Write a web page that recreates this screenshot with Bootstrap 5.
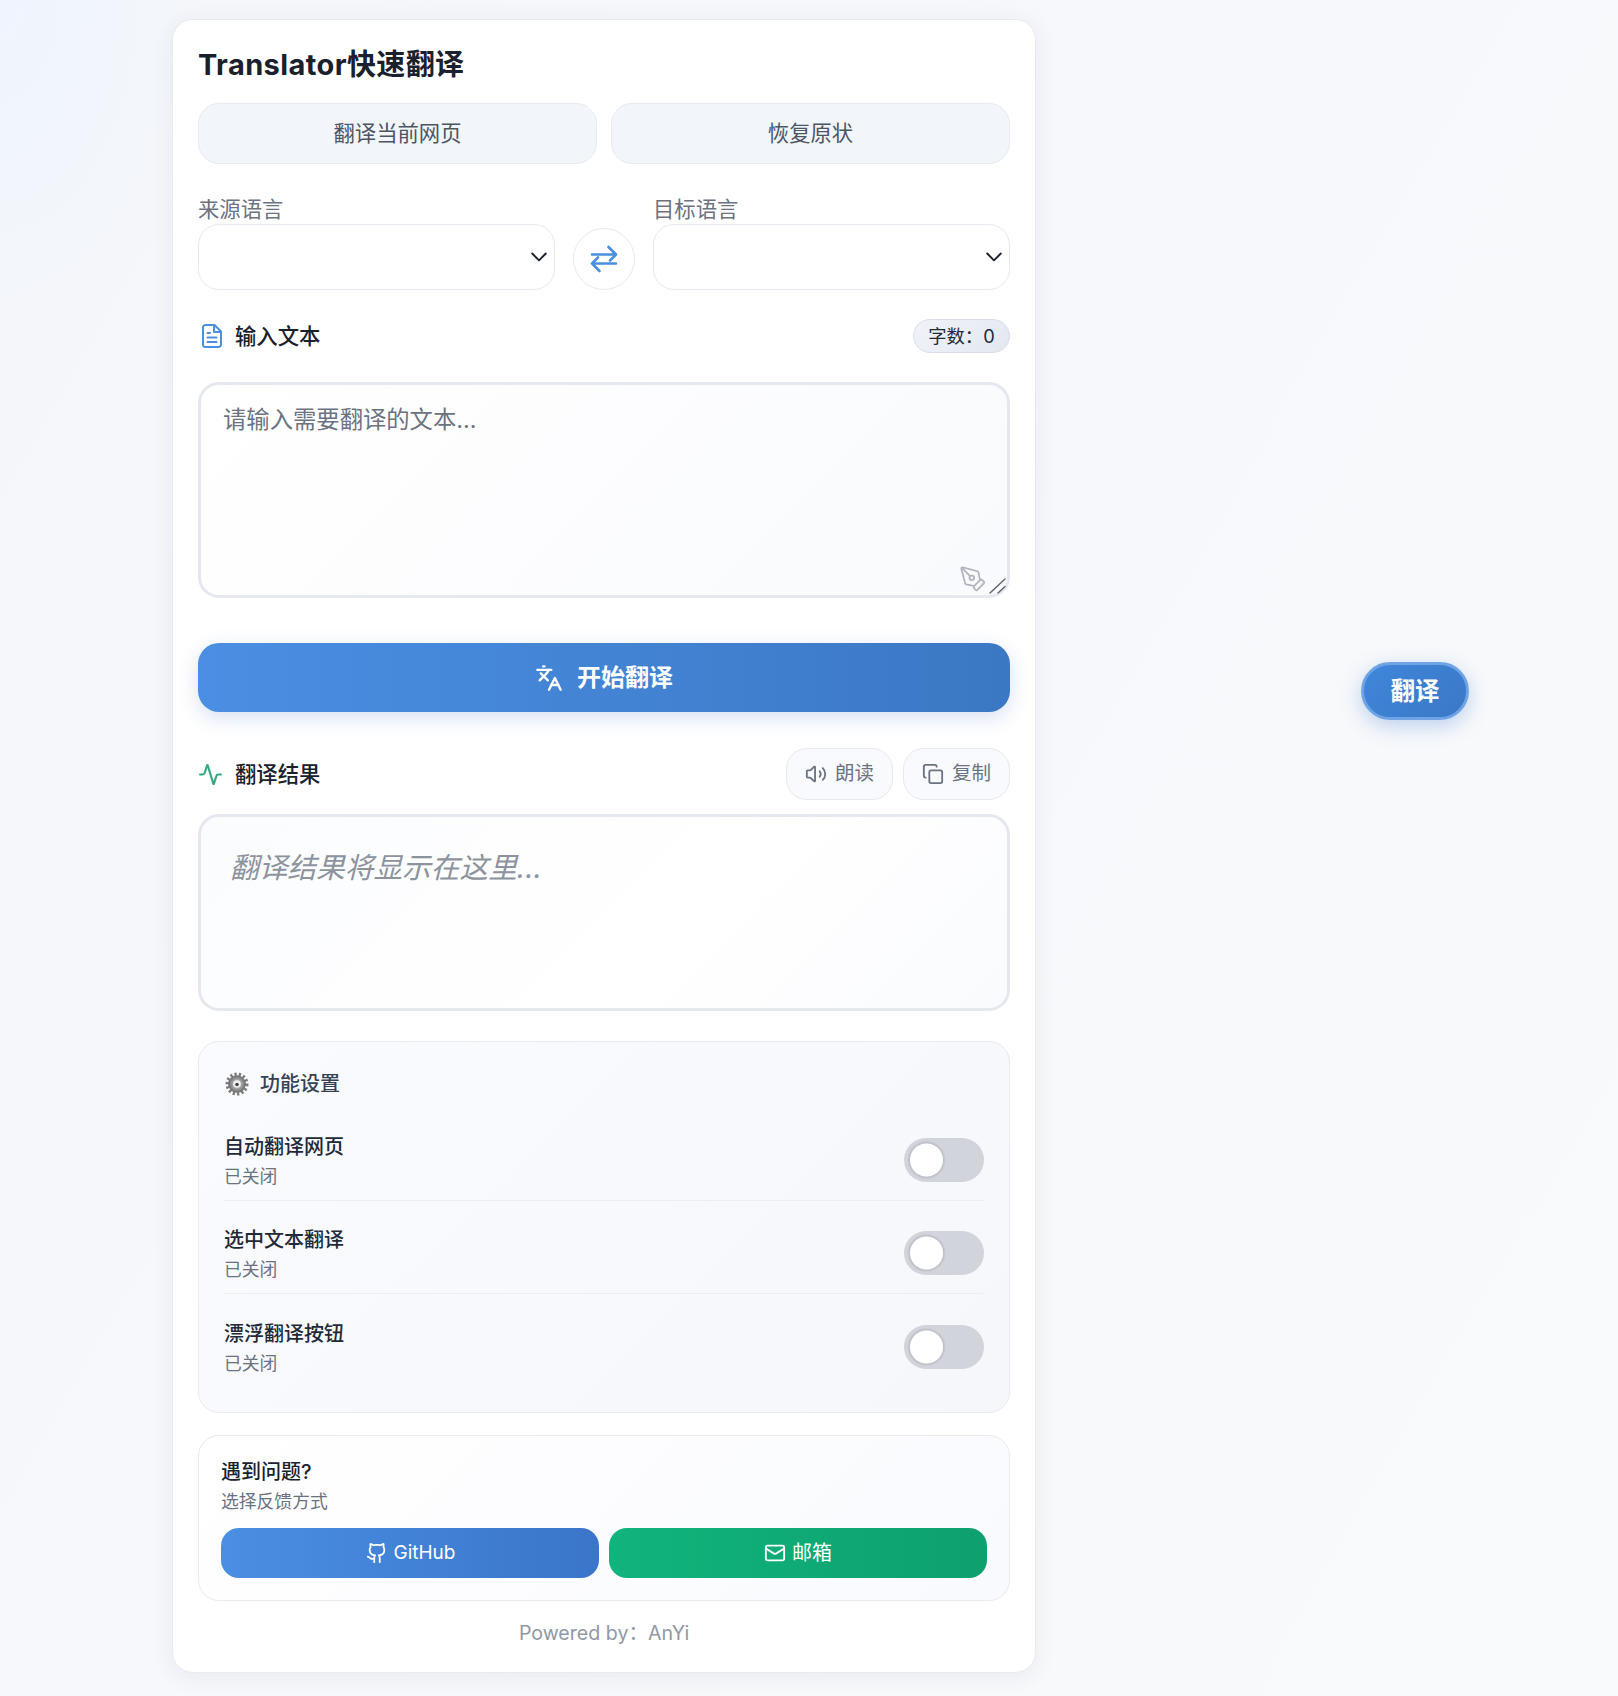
<!DOCTYPE html>
<html lang="zh-CN">
<head>
<meta charset="utf-8">
<title>Translator快速翻译</title>
<link href="https://cdn.jsdelivr.net/npm/bootstrap@5.3.0/dist/css/bootstrap.min.css" rel="stylesheet">
<style>
html,body{height:1696px}
body{margin:0;font-family:Inter,"Noto Sans CJK SC",sans-serif;color:#1f2937;overflow:hidden;
 background:radial-gradient(ellipse 200px 340px at 0 0,#eff5fe 0,rgba(239,245,254,0) 100%),linear-gradient(120deg,#f4f6fa 0,#f6f8fb 45%,#f9fafc 100%);position:relative}
.stage{padding:19px 0 0 172px}
.sheet{width:864px;height:1654px;background:#fff;border:1px solid #e9ebf2;border-radius:21px;padding:27px 25px 23px;box-shadow:0 4px 22px rgba(50,60,90,.08)}
.app-title{font-size:29px;line-height:36px;font-weight:700;letter-spacing:.4px;color:#1a202c;margin:0 0 20px}
.top-actions{display:grid;grid-template-columns:1fr 1fr;gap:14px}
.top-btn{height:61px;font-size:21.33px;color:#4b5563;background:#f2f5fa;border:1px solid #e7eaf1;border-radius:21px}
.lang-grid{display:grid;grid-template-columns:357px 62px 357px;column-gap:18px;align-items:end;margin-top:30px}
.lang-label{display:block;font-size:21.33px;line-height:30px;color:#6b7280;margin:0}
.lang-select{height:66px;border:1px solid #e7e9f0;border-radius:21px;box-shadow:none;background-color:#fff;
 background-image:url("data:image/svg+xml,%3csvg xmlns='http://www.w3.org/2000/svg' viewBox='0 0 16 10'%3e%3cpath fill='none' stroke='%231a202c' stroke-width='1.9' stroke-linecap='round' stroke-linejoin='round' d='M1.2 1.5 8 8.3l6.8-6.8'/%3e%3c/svg%3e");background-size:16px 10px;background-position:right 7px top 27px}
.swap-btn{width:62px;height:62px;padding:0;border:1px solid #e7e9f0;border-radius:50%;background:#fff;color:#4a8fe0}
.sec-head{display:flex;justify-content:space-between;align-items:center}
.sec-name{display:flex;align-items:center;font-size:21.33px;line-height:30px;font-weight:500;color:#1a202c}
.sec-ico{width:37px;flex:none;padding-left:2px}
.sec-ico-flat{padding-left:1px}
.head-input{margin-top:29px;height:34px}
.count-pill{height:34px;width:97px;padding:0;font-size:18.3px;font-weight:400;line-height:32px;color:#1f2937;background:linear-gradient(135deg,#f0f3f8,#e3e8f1);border:1px solid #d9dee7}
.input-wrap{margin-top:29px;height:216px;position:relative}
.src-text{height:216px;padding:19px 22px;font-size:23.33px;line-height:32px;border:3px solid #e6e8ef;border-radius:21px;background:linear-gradient(135deg,#fff,#f9fafd);color:#374151;box-shadow:none;resize:none}
.src-text::placeholder{color:#6b7280;opacity:1}
.pen-mark{position:absolute;left:761px;top:183px;color:#b0b5bd}
.grip-mark{position:absolute;left:790px;top:195px;color:#5b5f66}
.start-btn{width:100%;height:69px;margin-top:45px;border:0;border-radius:21px;color:#fff;font-size:24px;font-weight:700;
 background:linear-gradient(90deg,#4a8fe3,#3b78c4);box-shadow:0 6px 20px rgba(74,120,200,.22)}
.start-btn svg{margin-right:14px}
.head-result{margin-top:36px;height:52px}
.tool-row{gap:10px}
.tool-btn{width:107px;height:52px;padding:0;border:1px solid #e7e9f0;border-radius:21px;background:#f8fafd;color:#6b7280;font-size:19.5px;gap:8px}
.result-box{margin-top:14px;height:197px;padding:31px 29px;border:3px solid #e6e8ef;border-radius:21px;background:linear-gradient(135deg,#fbfcfe,#fff 60%,#fafbfe);color:#8d939d;font-size:28.7px;line-height:40px;font-style:italic}
.set-panel{margin-top:30px;height:372px;padding:28px 25px 25px;border:1px solid #e8eaf0;border-radius:21px;background:linear-gradient(135deg,#f9fbfe,#f5f7fb)}
.set-title{display:flex;align-items:center;font-size:20px;line-height:28px;font-weight:500;color:#374151;margin-bottom:9px}
.set-title svg{margin:0 11px 0 1px}
.set-row{display:flex;justify-content:space-between;align-items:center;padding:26px 0 10px;border-bottom:1px solid #eceef3;height:93.6px}
.set-row:last-child{border-bottom:0}
.set-name{font-size:20px;line-height:28px;font-weight:500;color:#1f2937;margin-bottom:3px}
.set-sub{font-size:17.8px;line-height:26px;color:#6b7280}
.switch-box{padding:0 0 3px;margin:0;min-height:0;line-height:0}
.switch-box .form-check-input.knob-switch{width:80px;height:44px;margin:0;border:0;border-radius:22px;box-shadow:none;background-color:#d1d5db;
 background-image:radial-gradient(circle at 22.5px 22px,#fff 0,#fff 16px,#bcc0c7 17px,#c8ccd2 18.5px,rgba(209,213,219,0) 19.5px);background-position:0 0;background-size:80px 44px;float:none}
.help-panel{margin-top:22px;height:166px;padding:22px 22px 21px;border:1px solid #e8eaf0;border-radius:21px;background:linear-gradient(135deg,#fff,#f9fafe)}
.help-title{font-size:20px;line-height:28px;font-weight:500;color:#1a202c;margin-bottom:3px}
.help-sub{font-size:17.8px;line-height:26px;color:#6b7280}
.help-actions{display:grid;grid-template-columns:1fr 1fr;gap:10px;margin-top:13px}
.help-btn{height:50px;padding:0;border:0;border-radius:18px;color:#fff;font-size:20px;gap:6px}
.help-git{background:linear-gradient(90deg,#4a8fe3,#3a75c9);font-size:19px;padding-left:1px}
.help-mail{background:linear-gradient(90deg,#10b47c,#0ea06e)}
.powered{margin-top:17px;font-size:19.6px;line-height:30px;color:#9198a3;text-align:center}
.float-btn{position:absolute;left:1361px;top:662px;width:108px;height:58px;padding:0;border:3px solid #6ea4e6;border-radius:29px;color:#fff;font-size:24.5px;font-weight:700;line-height:1;
 background:linear-gradient(135deg,#3f86da,#3a78c6);box-shadow:0 6px 20px rgba(74,130,215,.34)}
</style>
</head>
<body>
<div class="stage">
<main class="sheet">
  <h1 class="app-title">Translator快速翻译</h1>
  <div class="top-actions">
    <button type="button" class="btn top-btn">翻译当前网页</button>
    <button type="button" class="btn top-btn">恢复原状</button>
  </div>

  <div class="lang-grid">
    <div>
      <label class="lang-label" for="srcLang">来源语言</label>
      <select id="srcLang" class="form-select lang-select"></select>
    </div>
    <button type="button" class="btn swap-btn d-flex align-items-center justify-content-center" aria-label="swap">
      <svg width="32" height="32" viewBox="0 0 32 32" fill="none" stroke="currentColor" stroke-width="2.6" stroke-linecap="round" stroke-linejoin="round"><path d="M4 11.5h24M20.5 4l7.5 7.5-6 6"/><path d="M28 20.500H4M11.500 28 4 20.500l6-6"/></svg>
    </button>
    <div>
      <label class="lang-label" for="dstLang">目标语言</label>
      <select id="dstLang" class="form-select lang-select"></select>
    </div>
  </div>

  <div class="sec-head head-input">
    <div class="sec-name">
      <span class="sec-ico d-flex">
        <svg width="24" height="26" viewBox="0 0 24 26" fill="none" stroke="#4a8fe0" stroke-width="2" stroke-linecap="round" stroke-linejoin="round"><path d="M14.500 2H5.500A2.500 2.500 0 0 0 3 4.500v17A2.500 2.500 0 0 0 5.500 24h13a2.500 2.500 0 0 0 2.500-2.500V8.500z"/><path d="M14 2.500V9h7"/><path d="M7.500 10h2.500M7.500 14.500h9M7.500 19h9"/></svg>
      </span>
      输入文本
    </div>
    <span class="badge rounded-pill count-pill">字数：0</span>
  </div>

  <div class="input-wrap">
    <textarea class="form-control src-text" placeholder="请输入需要翻译的文本..."></textarea>
    <svg class="pen-mark" width="28" height="28" viewBox="0 0 24 24" fill="none" stroke="currentColor" stroke-width="1.5" stroke-linecap="round" stroke-linejoin="round"><path d="M15.707 21.293a1 1 0 0 1-1.414 0l-1.586-1.586a1 1 0 0 1 0-1.414l5.586-5.586a1 1 0 0 1 1.414 0l1.586 1.586a1 1 0 0 1 0 1.414z"/><path d="m18 13-1.375-6.874a1 1 0 0 0-.746-.776L3.235 2.028a1 1 0 0 0-1.207 1.207L5.350 15.879a1 1 0 0 0 .776.746L13 18"/><path d="m2.300 2.300 7.286 7.286"/><circle cx="11" cy="11" r="2"/></svg>
    <svg class="grip-mark" width="18" height="18" viewBox="0 0 18 18" fill="none" stroke="currentColor" stroke-width="1.3" stroke-linecap="round"><path d="M2 16 17 2M10 16l7-6.500"/></svg>
  </div>

  <button type="button" class="btn start-btn d-flex align-items-center justify-content-center">
    <svg width="28" height="30" viewBox="0 0 24 24" fill="none" stroke="currentColor" stroke-width="2" stroke-linecap="round" stroke-linejoin="round"><path d="m5 8 6 6"/><path d="m4 14 6-6 2-3"/><path d="M2 5h12"/><path d="M7 2h1"/><path d="m22 22-5-10-5 10"/><path d="M14 18h6"/></svg>
    开始翻译
  </button>

  <div class="sec-head head-result">
    <div class="sec-name">
      <span class="sec-ico sec-ico-flat d-flex">
        <svg width="23" height="21" viewBox="1 1 22 22" preserveAspectRatio="none" fill="none" stroke="#34a882" stroke-width="2" stroke-linecap="round" stroke-linejoin="round"><path d="M22 12h-2.480a2 2 0 0 0-1.930 1.460l-2.350 8.360a.25.25 0 0 1-.48 0L9.240 2.180a.25.25 0 0 0-.48 0l-2.350 8.360A2 2 0 0 1 4.490 12H2"/></svg>
      </span>
      翻译结果
    </div>
    <div class="d-flex tool-row">
      <button type="button" class="btn tool-btn d-flex align-items-center justify-content-center">
        <svg width="22" height="22" viewBox="0 0 24 24" fill="none" stroke="currentColor" stroke-width="2" stroke-linecap="round" stroke-linejoin="round"><path d="M11 4.700a.7.7 0 0 0-1.200-.5L6.400 7.600A1.400 1.400 0 0 1 5.400 8H3a1 1 0 0 0-1 1v6a1 1 0 0 0 1 1h2.400a1.400 1.400 0 0 1 1 .4l3.400 3.400a.7.7 0 0 0 1.200-.5z"/><path d="M16 9a5 5 0 0 1 0 6"/><path d="M19.400 18.400a9 9 0 0 0 0-12.800"/></svg>
        朗读
      </button>
      <button type="button" class="btn tool-btn d-flex align-items-center justify-content-center">
        <svg width="22" height="22" viewBox="0 0 24 24" fill="none" stroke="currentColor" stroke-width="2" stroke-linecap="round" stroke-linejoin="round"><rect x="8" y="8" width="14" height="14" rx="2"/><path d="M4 16c-1.100 0-2-.9-2-2V4c0-1.100.9-2 2-2h10c1.100 0 2 .9 2 2"/></svg>
        复制
      </button>
    </div>
  </div>

  <div class="result-box">翻译结果将显示在这里...</div>

  <section class="set-panel">
    <div class="set-title">
      <svg width="24" height="24" viewBox="0 0 24 24"><defs><radialGradient id="gearFill"><stop offset="0" stop-color="#e4e4e4"/><stop offset=".6" stop-color="#9a9a9a"/><stop offset="1" stop-color="#6a6a6a"/></radialGradient></defs><circle cx="12" cy="12" r="9.500" fill="none" stroke="#7d7d7d" stroke-width="4" stroke-dasharray="2.200 2"/><circle cx="12" cy="12" r="8.800" fill="url(#gearFill)"/><circle cx="12" cy="12" r="3.800" fill="#f2f2f2"/><circle cx="12" cy="12.500" r="1.800" fill="#444"/></svg>
      功能设置
    </div>
    <div class="set-row">
      <div><div class="set-name">自动翻译网页</div><div class="set-sub">已关闭</div></div>
      <div class="form-check form-switch switch-box"><input class="form-check-input knob-switch" type="checkbox" role="switch" aria-label="自动翻译网页"></div>
    </div>
    <div class="set-row">
      <div><div class="set-name">选中文本翻译</div><div class="set-sub">已关闭</div></div>
      <div class="form-check form-switch switch-box"><input class="form-check-input knob-switch" type="checkbox" role="switch" aria-label="选中文本翻译"></div>
    </div>
    <div class="set-row">
      <div><div class="set-name">漂浮翻译按钮</div><div class="set-sub">已关闭</div></div>
      <div class="form-check form-switch switch-box"><input class="form-check-input knob-switch" type="checkbox" role="switch" aria-label="漂浮翻译按钮"></div>
    </div>
  </section>

  <section class="help-panel">
    <div class="help-title">遇到问题?</div>
    <div class="help-sub">选择反馈方式</div>
    <div class="help-actions">
      <button type="button" class="btn help-btn help-git d-flex align-items-center justify-content-center">
        <svg width="22" height="24" viewBox="0 0 24 24" fill="none" stroke="currentColor" stroke-width="2" stroke-linecap="round" stroke-linejoin="round"><path d="M15 22v-4a4.800 4.800 0 0 0-1-3.500c3 0 6-2 6-5.500.08-1.250-.27-2.480-1-3.500.28-1.150.28-2.350 0-3.500 0 0-1 0-3 1.500-2.640-.5-5.360-.5-8 0C6 2 5 2 5 2c-.3 1.150-.3 2.350 0 3.500A5.403 5.403 0 0 0 4 9c0 3.500 3 5.500 6 5.500-.39.49-.68 1.050-.85 1.650-.17.6-.22 1.230-.15 1.850v4"/><path d="M9 18c-4.510 2-5-2-7-2"/></svg>
        GitHub
      </button>
      <button type="button" class="btn help-btn help-mail d-flex align-items-center justify-content-center">
        <svg width="22" height="22" viewBox="0 0 24 24" fill="none" stroke="currentColor" stroke-width="2" stroke-linecap="round" stroke-linejoin="round"><rect x="2" y="4" width="20" height="16" rx="2"/><path d="m22 7-8.970 5.700a1.940 1.940 0 0 1-2.060 0L2 7"/></svg>
        邮箱
      </button>
    </div>
  </section>

  <div class="powered">Powered by：AnYi</div>
</main>
</div>
<button type="button" class="btn float-btn">翻译</button>
</body>
</html>
